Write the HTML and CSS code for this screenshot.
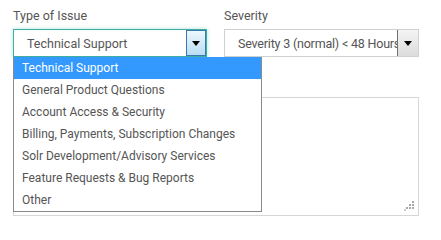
FILE: index.html
```html
<!DOCTYPE html>
<html>
<head>
<meta charset="utf-8">
<link rel="stylesheet" href="styles.css">
</head>
<body>
<div class="form">
  <div class="row">
    <div class="field field-type">
      <label class="label">Type of Issue</label>
      <div class="select select-active">
        <span class="select-text">Technical Support</span>
        <span class="arrow arrow-blue"><span class="tri"></span></span>
      </div>
      <ul class="dropdown">
        <li class="opt opt-selected">Technical Support</li>
        <li class="opt">General Product Questions</li>
        <li class="opt">Account Access &amp; Security</li>
        <li class="opt">Billing, Payments, Subscription Changes</li>
        <li class="opt">Solr Development/Advisory Services</li>
        <li class="opt">Feature Requests &amp; Bug Reports</li>
        <li class="opt">Other</li>
      </ul>
    </div>
    <div class="field field-sev">
      <label class="label">Severity</label>
      <div class="select">
        <span class="select-text sev-text">Severity 3 (normal) &lt; 48 Hours</span>
        <span class="arrow arrow-gray"><span class="tri"></span></span>
      </div>
    </div>
  </div>
  <div class="textarea">
    <svg class="grip" width="10" height="10" viewBox="0 0 10 10">
      <rect x="8" y="0" width="2" height="2" fill="#aaa"/>
      <rect x="5" y="3" width="2" height="2" fill="#aaa"/>
      <rect x="8" y="3" width="2" height="2" fill="#aaa"/>
      <rect x="2" y="6" width="2" height="2" fill="#aaa"/>
      <rect x="5" y="6" width="2" height="2" fill="#aaa"/>
      <rect x="8" y="6" width="2" height="2" fill="#aaa"/>
      <rect x="0" y="8" width="2" height="2" fill="#ccc"/>
    </svg>
  </div>
</div>
</body>
</html>
```

FILE: styles.css
```css
* { box-sizing: border-box; }
html, body { margin: 0; padding: 0; background: #fff; }
body {
  font-family: Roboto, "Liberation Sans", sans-serif;
  font-size: 12px;
  color: #555;
}
.form {
  padding: 7px 22px 0 13px;
  width: 441px;
}
.row {
  display: flex;
  gap: 17px;
}
.field {
  position: relative;
  display: flex;
  flex-direction: column;
}
.field-type { width: 194px; }
.field-sev { width: 195px; }
.label {
  display: block;
  height: 22px;
  line-height: 17px;
  font-size: 12.5px;
  color: #555;
}
.select {
  position: relative;
  height: 28px;
  border: 1px solid #d0d0d0;
  background: #fff;
  display: flex;
  align-items: center;
  overflow: hidden;
}
.select-active {
  border-color: #3fae9e;
  box-shadow: 0 0 4px rgba(80, 190, 170, 0.45);
}
.select-text {
  padding-left: 13px;
  white-space: nowrap;
  color: #555;
  font-size: 12.5px;
}
.sev-text { padding-left: 13px; letter-spacing: -0.2px; }
.arrow {
  position: absolute;
  top: 0;
  right: 0;
  bottom: 0;
  width: 21px;
  display: flex;
  align-items: center;
  justify-content: center;
}
.arrow-blue {
  width: 20px;
  border: 1px solid #3a78b0;
  background: linear-gradient(#eef7fd, #b9ddf4);
}
.arrow-gray {
  top: -1px;
  bottom: -1px;
  right: -1px;
  width: 22px;
  border: 1px solid #707070;
  background: linear-gradient(#f4f4f4, #dcdcdc);
}
.tri {
  width: 0;
  height: 0;
  border-left: 4px solid transparent;
  border-right: 4px solid transparent;
  border-top: 5px solid #000;
  margin-top: 1px;
}
.dropdown {
  position: absolute;
  left: 0;
  top: 50px;
  width: 249px;
  margin: 0;
  padding: 0;
  list-style: none;
  background: #fff;
  border: 1px solid #8a8a8a;
  border-top: none;
  z-index: 5;
}
.opt {
  height: 22px;
  line-height: 22px;
  padding-left: 8px;
  color: #555;
  white-space: nowrap;
}
.opt-selected {
  background: #3399ff;
  color: #fff;
}
.textarea {
  position: relative;
  margin-top: 40px;
  width: 406px;
  height: 119px;
  border: 1px solid #d6d6d6;
  background: #fff;
}
.grip {
  position: absolute;
  right: 4px;
  bottom: 4px;
}
```
